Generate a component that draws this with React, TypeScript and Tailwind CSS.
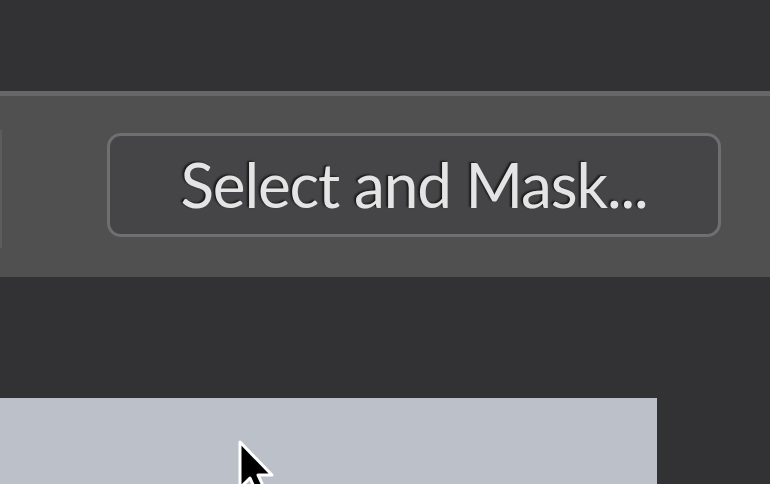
export default function App() {
  return (
    <div className="w-[770px] h-[484px] overflow-hidden bg-[#323234] flex flex-col" style={{ fontFamily: "Lato, 'Open Sans', sans-serif" }}>
      {/* top dark strip */}
      <div className="h-[91px] shrink-0 bg-[#323234]" />
      {/* options bar */}
      <div className="h-[186px] shrink-0 bg-[#505051] border-t-[5px] border-[#67676a] flex items-start">
        <div className="w-[2px] h-[118px] mt-[34px] bg-[#5c5c5e]" />
        <div className="ml-[105px] mt-[37px] w-[614px] h-[104px] rounded-[14px] border-[3px] border-[#6f6f71] bg-[#454547] flex items-center justify-center">
          <span className="text-[62px] tracking-[-1.1px] leading-none text-[#e4e4e4] pb-[2px] [text-shadow:-2px_-1px_2px_rgba(0,0,0,0.65)]">
            Select and Mask...
          </span>
        </div>
      </div>
      {/* canvas area */}
      <div className="flex-1 flex flex-col pt-[121px]">
        <div className="relative w-[657px] flex-1 bg-[#bcc1c9]">
          <svg className="absolute left-[236px] top-[40px]" width="40" height="60" viewBox="0 0 40 60">
            <path d="M4 4 L4 50 L14 40 L22 58 L30 54 L22 37 L36 37 Z" fill="#000" stroke="#fff" strokeWidth="3" strokeLinejoin="round" />
          </svg>
        </div>
      </div>
    </div>
  );
}
